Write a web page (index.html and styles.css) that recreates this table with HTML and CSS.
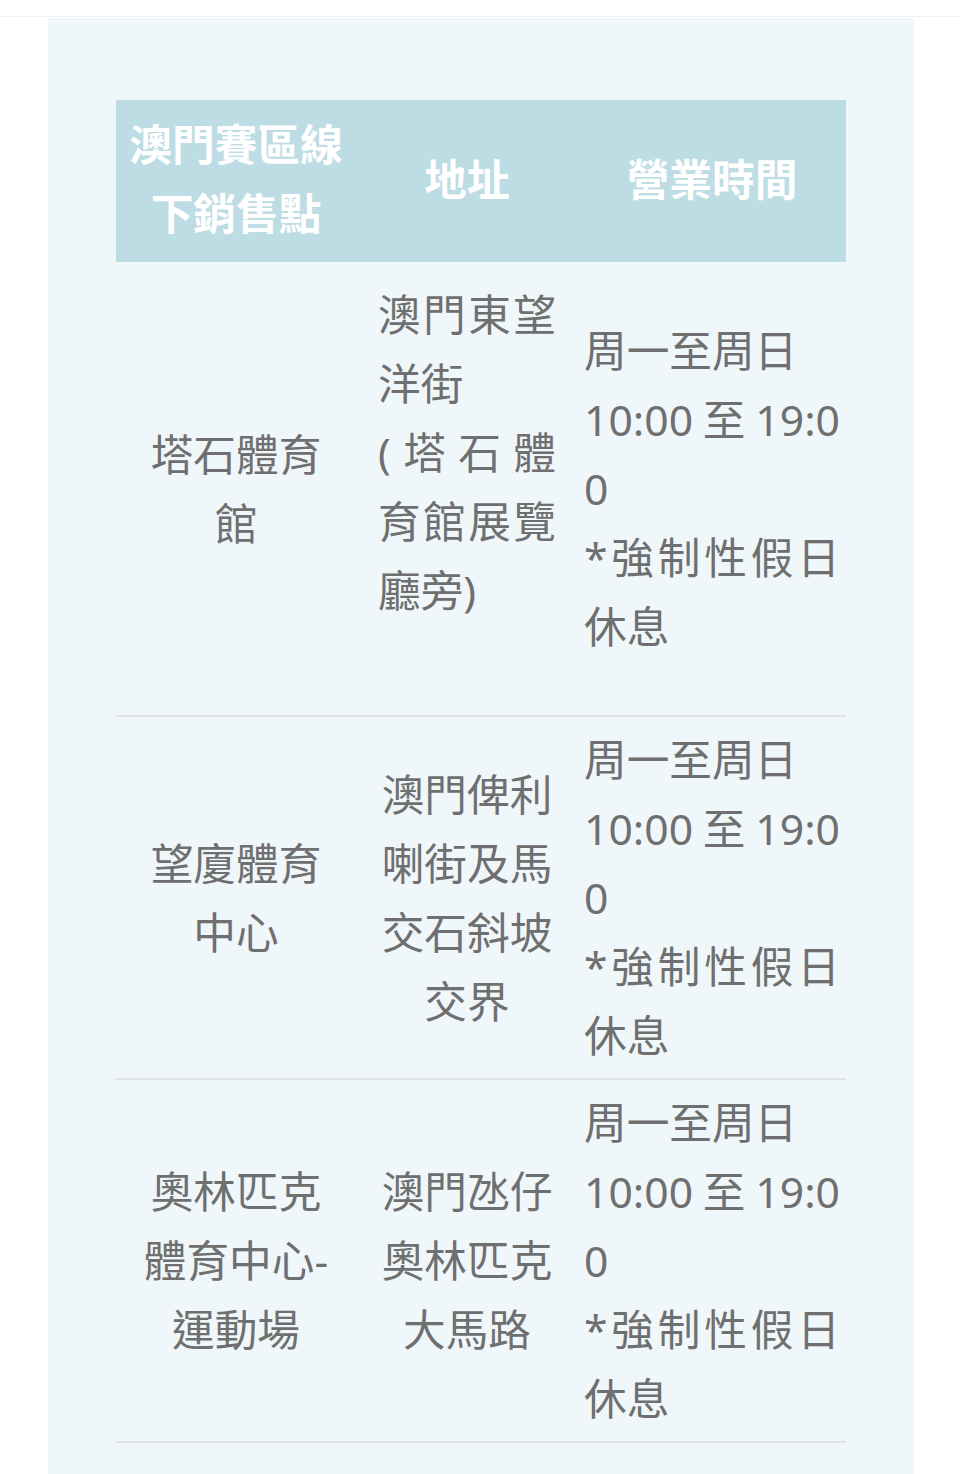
FILE: index.html
```html
<!DOCTYPE html>
<html lang="zh-Hant">
<head>
<meta charset="utf-8">
<title>澳門賽區線下銷售點</title>
<link rel="stylesheet" href="styles.css">
</head>
<body>
<div class="topbar"></div>
<main class="panel">
  <table class="points">
    <colgroup>
      <col class="c-name">
      <col class="c-addr">
      <col class="c-time">
    </colgroup>
    <thead>
      <tr>
        <th class="h-name">澳門賽區線下銷售點</th>
        <th>地址</th>
        <th>營業時間</th>
      </tr>
    </thead>
    <tbody>
      <tr>
        <td class="name">塔石體育館</td>
        <td class="addr addr-just">澳門東望洋街<br>(塔石體育館展覽廳旁)</td>
        <td class="time">周一至周日<br>10:00至19:00<br>*強制性假日休息</td>
      </tr>
      <tr>
        <td class="name">望廈體育中心</td>
        <td class="addr">澳門俾利喇街及馬交石斜坡交界</td>
        <td class="time">周一至周日<br>10:00至19:00<br>*強制性假日休息</td>
      </tr>
      <tr>
        <td class="name">奧林匹克體育中心-運動場</td>
        <td class="addr">澳門氹仔奧林匹克大馬路</td>
        <td class="time">周一至周日<br>10:00至19:00<br>*強制性假日休息</td>
      </tr>
    </tbody>
  </table>
</main>
</body>
</html>
```

FILE: styles.css
```css
html, body {
  margin: 0;
  padding: 0;
  background: #ffffff;
}

body {
  font-family: "Noto Sans", "Noto Sans CJK TC", sans-serif;
  font-size: 42.67px;
  color: #6f6f6f;
}

.topbar {
  height: 16px;
  border-bottom: 1px solid #f1f1f1;
  margin-bottom: 1px;
}

.panel {
  display: block;
  width: 730px;
  margin-left: 48px;
  padding: 82px 68px 60px;
  background: #eff7fa;
}

.points {
  width: 730px;
  table-layout: fixed;
  border-collapse: collapse;
  border-spacing: 0;
}

.c-name { width: 240px; }
.c-addr { width: 222px; }
.c-time { width: 268px; }

.points th {
  background: #bedce4;
  color: #ffffff;
  font-weight: 700;
  line-height: 69px;
  text-align: center;
  vertical-align: middle;
  padding: 10px 6px 14px;
}

.points th.h-name {
  padding-left: 12px;
  padding-right: 12px;
}

.points td {
  line-height: 69px;
  vertical-align: middle;
  word-break: break-all;
  padding: 8px 6px;
  border-bottom: 2px solid #dde3e6;
}

.points td.name {
  text-align: center;
  padding-left: 20px;
  padding-right: 20px;
}

.points td.addr {
  text-align: center;
  padding-left: 22px;
  padding-right: 22px;
}

.points td.addr-just {
  text-align: justify;
  text-align-last: left;
  vertical-align: top;
  padding-top: 18px;
  padding-bottom: 90px;
}

.points td.time {
  text-align: justify;
  text-align-last: left;
}
```
